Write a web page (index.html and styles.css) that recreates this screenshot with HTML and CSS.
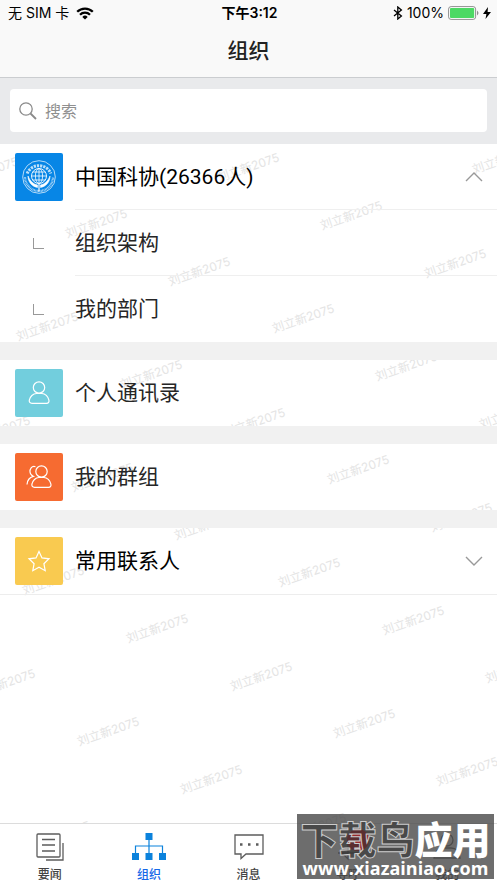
FILE: index.html
```html
<!DOCTYPE html>
<html lang="zh-CN">
<head>
    <meta charset="UTF-8">
    <meta name="viewport" content="width=device-width, initial-scale=1.0">
    <title>组织</title>
    <link rel="stylesheet" href="styles.css">
</head>
<body>
    <header class="header">
        <div class="status">
            <div class="status-left">
                <span>无 SIM 卡</span>
                <svg width="18" height="13" viewBox="0 0 18 13" fill="none" stroke="#000" stroke-width="2.3">
                    <path d="M1.2 4.8a11 11 0 0 1 15.6 0"/>
                    <path d="M4 7.7a7 7 0 0 1 10 0"/>
                    <path d="M9 12.6L6.3 9.9a3.9 3.9 0 0 1 5.4 0z" fill="#000" stroke="none"/>
                </svg>
            </div>
            <strong class="status-time">下午3:12</strong>
            <div class="status-right">
                <svg width="10" height="14" viewBox="0 0 10 14" fill="none" stroke="#000" stroke-width="1.3">
                    <path d="M1 4l7.4 6L4.8 13V1l3.6 3L1 10"/>
                </svg>
                <span>100%</span>
                <svg width="31" height="14" viewBox="0 0 31 14">
                    <rect x=".6" y=".6" width="27" height="12.8" rx="2.5" fill="#fff" stroke="#8e8e8e"/>
                    <rect x="2" y="2" width="24.2" height="10" rx="1" fill="#4cd964"/>
                    <path d="M29 4.5q3 2.5 0 5z" fill="#8e8e8e"/>
                </svg>
                <svg width="8" height="12" viewBox="0 0 8 12"><path d="M5 0L0 7h3.4L2.5 12 8 5H4.6z" fill="#000"/></svg>
            </div>
        </div>
        <h1 class="title">组织</h1>
    </header>

    <form class="search">
        <label class="search-box">
            <svg width="18" height="18" viewBox="0 0 18 18" fill="none" stroke="#8a8a8a">
                <circle cx="7" cy="7" r="6.2" stroke-width="1.3"/>
                <path d="M11.5 11.5L17 17" stroke-width="1.8"/>
            </svg>
            <input type="search" placeholder="搜索" aria-label="搜索">
        </label>
    </form>

    <main class="main">
        <svg class="watermark" aria-hidden="true">
            <text transform="translate(-42 42) rotate(-19)">刘立新2075</text>
            <text transform="translate(219 38) rotate(-19)">刘立新2075</text>
            <text transform="translate(474 30) rotate(-19)">刘立新2075</text>
            <text transform="translate(67 94) rotate(-19)">刘立新2075</text>
            <text transform="translate(322 86) rotate(-19)">刘立新2075</text>
            <text transform="translate(170 142) rotate(-19)">刘立新2075</text>
            <text transform="translate(426 134) rotate(-19)">刘立新2075</text>
            <text transform="translate(18 197) rotate(-19)">刘立新2075</text>
            <text transform="translate(274 189) rotate(-19)">刘立新2075</text>
            <text transform="translate(122 245) rotate(-19)">刘立新2075</text>
            <text transform="translate(377 237) rotate(-19)">刘立新2075</text>
            <text transform="translate(-30 301) rotate(-19)">刘立新2075</text>
            <text transform="translate(225 293) rotate(-19)">刘立新2075</text>
            <text transform="translate(481 285) rotate(-19)">刘立新2075</text>
            <text transform="translate(73 348) rotate(-19)">刘立新2075</text>
            <text transform="translate(329 340) rotate(-19)">刘立新2075</text>
            <text transform="translate(176 396) rotate(-19)">刘立新2075</text>
            <text transform="translate(432 388) rotate(-19)">刘立新2075</text>
            <text transform="translate(24 451) rotate(-19)">刘立新2075</text>
            <text transform="translate(280 443) rotate(-19)">刘立新2075</text>
            <text transform="translate(128 499) rotate(-19)">刘立新2075</text>
            <text transform="translate(384 491) rotate(-19)">刘立新2075</text>
            <text transform="translate(-25 554) rotate(-19)">刘立新2075</text>
            <text transform="translate(232 547) rotate(-19)">刘立新2075</text>
            <text transform="translate(487 539) rotate(-19)">刘立新2075</text>
            <text transform="translate(79 602) rotate(-19)">刘立新2075</text>
            <text transform="translate(335 594) rotate(-19)">刘立新2075</text>
            <text transform="translate(182 650) rotate(-19)">刘立新2075</text>
            <text transform="translate(438 642) rotate(-19)">刘立新2075</text>
            <text transform="translate(30 706) rotate(-19)">刘立新2075</text>
            <text transform="translate(286 698) rotate(-19)">刘立新2075</text>
        </svg>

        <section class="group">
            <button class="row strong" type="button" aria-expanded="true">
                <span class="tile blue">
                    <svg width="36" height="36" viewBox="0 0 36 36" fill="none" stroke="#fff">
                        <circle cx="18" cy="18" r="16.3" stroke-width=".7"/>
                        <path d="M6.2 14.5A12.8 12.8 0 0 1 29.8 14.5" stroke-width="3" stroke-dasharray="2.2 1" opacity=".75"/>
                        <path d="M4 18a14 14 0 0 0 28 0" stroke-width="2.2" stroke-dasharray=".8 .6" opacity=".7"/>
                        <circle cx="18" cy="17" r="7.5" stroke-width=".9"/>
                        <ellipse cx="18" cy="17" rx="3.6" ry="7.5" stroke-width=".8"/>
                        <path d="M18 9.5v15M10.5 17h15M11.7 13h12.6M11.7 21h12.6" stroke-width=".8"/>
                        <path d="M7 17c0 6 4 10.5 9.5 11.5v-2.5C12 25 9 22 7 17zM29 17c0 6-4 10.5-9.5 11.5v-2.5C24 25 27 22 29 17z" fill="#fff" stroke-width=".6"/>
                        <path d="M18 24.5v8" stroke-width="1.2"/>
                    </svg>
                </span>
                <span class="label line">中国科协(26366人)</span>
                <svg class="chevron" width="18" height="10" viewBox="0 0 18 10"><path d="M1 9l8-8 8 8"/></svg>
            </button>
            <a class="row" href="#structure">
                <span class="branch"></span>
                <span class="label line">组织架构</span>
            </a>
            <a class="row" href="#department">
                <span class="branch"></span>
                <span class="label">我的部门</span>
            </a>
        </section>

        <section class="group">
            <a class="row" href="#contacts">
                <span class="tile cyan">
                    <svg width="24" height="26" viewBox="0 0 24 26">
                        <circle cx="12" cy="7.5" r="5.7"/>
                        <path d="M5 23.3h14.5c2 0 2.8-1.4 2.4-3.2-.8-3.8-3.8-6.6-7-6.6H9.5c-3.4 0-6.5 3-7.2 6.6-.3 1.8.7 3.2 2.7 3.2z"/>
                    </svg>
                </span>
                <span class="label">个人通讯录</span>
            </a>
        </section>

        <section class="group">
            <a class="row" href="#groups">
                <span class="tile orange">
                    <svg width="26" height="26" viewBox="0 0 26 26">
                        <circle cx="15.5" cy="7.5" r="5.7"/>
                        <path d="M8.5 23.3h14c2 0 2.8-1.4 2.4-3.2-.8-3.8-3.8-6.6-7-6.6h-5c-3.2 0-6.3 3-7 6.6-.3 1.8.6 3.2 2.6 3.2z"/>
                        <path d="M9.5 2.7C5.5 1.5 3.7 5 4 8c.2 2 1.2 3.3 3.3 4.3C3.5 13.3 1.3 16 1 20.5"/>
                    </svg>
                </span>
                <span class="label">我的群组</span>
            </a>
        </section>

        <section class="group last">
            <button class="row strong" type="button" aria-expanded="false">
                <span class="tile yellow">
                    <svg width="24" height="24" viewBox="0 0 24 24">
                        <path d="M12 2.5l3 6.4 7 .9-5.1 4.9 1.3 7L12 18.3l-6.2 3.4 1.3-7L2 9.8l7-.9z"/>
                    </svg>
                </span>
                <span class="label">常用联系人</span>
                <svg class="chevron" width="18" height="10" viewBox="0 0 18 10"><path d="M1 1l8 8 8-8"/></svg>
            </button>
        </section>
    </main>

    <nav class="tabs">
        <a class="tab" href="#news">
            <svg width="28" height="28" viewBox="0 0 28 28" fill="none" stroke="#5c5c5c" stroke-width="1.3">
                <rect x="1" y="1" width="23" height="23" rx="1"/>
                <path d="M6 6.5h13M6 12h13M6 18h13M27 10v17H10"/>
            </svg>
            <span>要闻</span>
        </a>
        <a class="tab active" href="#org" aria-current="page">
            <svg width="36" height="28" viewBox="0 0 36 28" fill="#0b82dc">
                <rect x="14.5" y="0" width="7" height="7"/>
                <rect x="1" y="20" width="7" height="7"/>
                <rect x="14.5" y="20" width="7" height="7"/>
                <rect x="28" y="20" width="7" height="7"/>
                <path d="M18 6v14M4.5 20v-7h27v7" fill="none" stroke="#0b82dc" stroke-width="1.2"/>
            </svg>
            <span>组织</span>
        </a>
        <a class="tab" href="#messages">
            <svg width="30" height="28" viewBox="0 0 30 28" fill="none" stroke="#5c5c5c" stroke-width="1.3">
                <path d="M1 2h28v19H12l-5 4.5V21H1z"/>
                <path d="M6 11.5h2.500M14 11.500h2.500M22 11.500h2.500" stroke-width="2.5"/>
            </svg>
            <span>消息</span>
        </a>
        <a class="tab" href="#call">
            <svg width="28" height="28" viewBox="0 0 28 28" fill="none" stroke="#5c5c5c" stroke-width="1.3">
                <path d="M4 20h20M8 20l6 6V11"/>
            </svg>
            <span>寻呼</span>
        </a>
        <a class="tab" href="#me">
            <svg width="28" height="28" viewBox="0 0 28 28" fill="none" stroke="#5c5c5c" stroke-width="1.3">
                <circle cx="14" cy="7" r="6"/>
                <path d="M1 25c1-8 5-10 9-10h8c4 0 8 2 9 10z"/>
            </svg>
            <span>我的</span>
        </a>
    </nav>

    <aside class="banner">
        <svg class="banner-badge" width="24" height="24" viewBox="0 0 24 24">
            <circle cx="12" cy="12" r="11" fill="#982a2e"/>
        </svg>
        <div class="banner-name"><span class="outlined">下载鸟</span>应用</div>
        <div class="banner-url">www.xiazainiao.com</div>
    </aside>
</body>
</html>
```
FILE: styles.css
```css
* {
    box-sizing: border-box;
}
body {
    margin: 0;
    min-height: 100vh;
    display: flex;
    flex-direction: column;
    position: relative;
    font-family: Inter, "Noto Sans CJK SC", sans-serif;
    color: #222;
    background-color: #fff;
    overflow-x: hidden;
}
svg {
    display: block;
    flex-shrink: 0;
}
a {
    color: inherit;
    text-decoration: none;
}

/* status bar and title */
.header {
    background-color: #f9f9f9;
    border-bottom: 1px solid #cbcdd0;
}
.status {
    display: grid;
    grid-template-columns: 1fr auto 1fr;
    align-items: center;
    height: 26px;
    padding: 0 6px 0 8px;
    font-size: 14px;
    line-height: 26px;
    color: #000;
}
.status-left, .status-right {
    display: flex;
    align-items: center;
    gap: 7px;
}
.status-right {
    justify-content: flex-end;
    gap: 4px;
}
.status-time {
    font-weight: 600;
}
.title {
    margin: 0;
    height: 51px;
    font-size: 21px;
    font-weight: 500;
    line-height: 50px;
    text-align: center;
}

/* search */
.search {
    padding: 11px 10px 12px;
    background-color: #e9eaec;
}
.search-box {
    display: flex;
    align-items: center;
    gap: 8px;
    height: 43px;
    padding: 0 9px;
    border-radius: 4px;
    background-color: #fff;
}
.search-box input {
    flex: 1;
    min-width: 0;
    padding: 0;
    border: 0;
    outline: 0;
    background: none;
    font-family: inherit;
    font-size: 16px;
}
.search-box input::placeholder {
    color: #8f8f8f;
}

/* list */
.main {
    flex: 1;
    position: relative;
    z-index: 0;
    overflow: hidden;
}
.watermark {
    position: absolute;
    inset: 0;
    width: 100%;
    height: 100%;
    z-index: -1;
    font-size: 12px;
    fill: #e4e4e4;
}
.group {
    border-bottom: 18px solid #f1f1f1;
}
.group.last {
    border-bottom: 1px solid #ededed;
}
.row {
    display: flex;
    align-items: center;
    gap: 12px;
    width: 100%;
    height: 66px;
    padding: 0 0 0 15px;
    border: 0;
    background: none;
    font-family: Roboto, "Noto Sans CJK SC", sans-serif;
    font-size: 21px;
    color: #262626;
    text-align: left;
}
.row.strong {
    color: #000;
}
.label {
    flex: 1;
    padding-top: 2px;
    line-height: 63px;
    border-bottom: 1px solid transparent;
}
.label.line {
    border-bottom-color: #efefef;
}
.row .chevron {
    margin: 0 14px 0 -44px;
    fill: none;
    stroke: #999;
    stroke-width: 1.4;
}
.tile {
    display: flex;
    align-items: center;
    justify-content: center;
    width: 48px;
    height: 48px;
    border-radius: 2px;
}
.tile svg {
    fill: none;
    stroke: #fff;
    stroke-width: 1.2;
}
.blue { background-color: #0786e6; }
.cyan { background-color: #72cedd; }
.orange { background-color: #f66b31; }
.yellow { background-color: #f9ca50; }
.branch {
    width: 11px;
    height: 11px;
    margin: 0 19px 0 18px;
    border-left: 1px solid #999;
    border-bottom: 1px solid #999;
}

/* bottom tabs */
.tabs {
    display: flex;
    height: 60px;
    border-top: 1px solid #dcdcdc;
    background-color: #fff;
}
.tab {
    flex: 1;
    display: flex;
    flex-direction: column;
    align-items: center;
    gap: 5px;
    padding-top: 9px;
    font-size: 12px;
    font-weight: 500;
    line-height: 18px;
    color: #444;
}
.tab.active {
    color: #1467e8;
}

/* download banner over the tab bar */
.banner {
    position: absolute;
    right: 3px;
    bottom: 4px;
    width: 197px;
    height: 65px;
    padding-top: 7px;
    background-color: rgba(72, 72, 72, 0.8);
    color: #fff;
    font-weight: 700;
    text-align: center;
    white-space: nowrap;
}
.banner-badge {
    position: absolute;
    left: 49px;
    top: 14px;
}
.banner-name {
    position: relative;
    font-size: 38px;
    font-weight: 900;
    line-height: 38px;
}
.outlined {
    color: rgba(50, 50, 50, 0.6);
    -webkit-text-stroke: 1px #ccc;
}
.banner-url {
    position: relative;
    font-family: "Open Sans", sans-serif;
    font-size: 18px;
    line-height: 18px;
}
```
